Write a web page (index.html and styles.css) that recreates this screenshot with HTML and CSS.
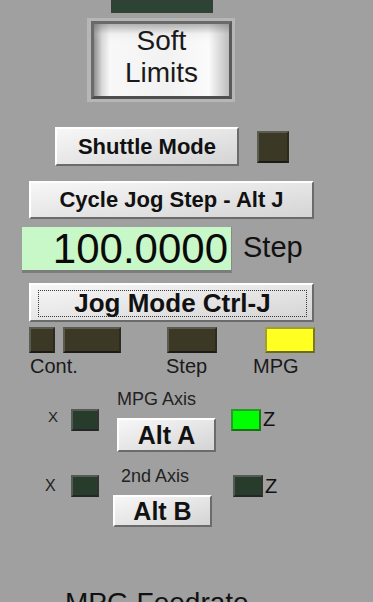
FILE: index.html
```html
<!DOCTYPE html>
<html>
<head>
<meta charset="utf-8">
<link rel="stylesheet" href="styles.css">
</head>
<body>
<div class="panel">
  <div class="led led-green-dark top-led"></div>

  <div class="soft">
    <div class="soft-in">Soft<br>Limits</div>
  </div>

  <div class="row shuttle-row">
    <div class="btn shuttle">Shuttle Mode</div>
    <div class="led led-olive shuttle-led"></div>
  </div>

  <div class="btn cycle">Cycle Jog Step - Alt J</div>

  <div class="row dro-row">
    <div class="dro">100.0000</div>
    <div class="dro-label">Step</div>
  </div>

  <div class="btn jog"><span class="focus">Jog Mode Ctrl-J</span></div>

  <div class="row mode-leds">
    <div class="led led-olive m1"></div>
    <div class="led led-olive m2"></div>
    <div class="led led-olive m3"></div>
    <div class="led led-yellow m4"></div>
  </div>

  <div class="row mode-labels">
    <span class="lbl-cont">Cont.</span>
    <span class="lbl-step">Step</span>
    <span class="lbl-mpg">MPG</span>
  </div>

  <div class="row axis axis1">
    <span class="axis-x">X</span>
    <div class="led led-green-dark axis-led"></div>
    <div class="axis-center">
      <div class="axis-title">MPG Axis</div>
      <div class="btn alt">Alt A</div>
    </div>
    <div class="led led-green axis-led-r"></div>
    <span class="axis-z">Z</span>
  </div>

  <div class="row axis axis2">
    <span class="axis-x">X</span>
    <div class="led led-green-dark axis-led"></div>
    <div class="axis-center">
      <div class="axis-title">2nd Axis</div>
      <div class="btn alt">Alt B</div>
    </div>
    <div class="led led-green-dark axis-led-r"></div>
    <span class="axis-z">Z</span>
  </div>

  <div class="feed">MPG Feedrate</div>
</div>
</body>
</html>
```

FILE: styles.css
```css
html, body {
  margin: 0;
  padding: 0;
  background: #a0a0a0;
  overflow: hidden;
}
body {
  width: 373px;
  height: 602px;
  font-family: "Liberation Sans", Arial, sans-serif;
  color: #111;
}
.panel {
  display: flex;
  flex-direction: column;
  align-items: flex-start;
}
.row {
  display: flex;
  flex-direction: row;
}

/* LEDs */
.led {
  box-sizing: border-box;
  border-style: solid;
  border-width: 2px;
}
.led-olive {
  background: #3b3926;
  border-color: #5c5b50 #2c2b20 #1c1c16 #5c5b50;
}
.led-green-dark {
  background: #283c2c;
  border-color: #565a56 #333 #262626 #565a56;
}
.led-green {
  background: #00ff00;
  border-color: #2a9a2a #1c7a1c #187018 #2a9a2a;
}
.led-yellow {
  background: #ffff22;
  border-color: #a0a030 #78781c #6a6a18 #a0a030;
}

.top-led {
  margin-left: 111px;
  width: 102px;
  height: 13px;
  border-width: 1px;
  border-color: #3c3c3c;
  background: #2b4433;
}

/* Soft Limits */
.soft {
  box-sizing: border-box;
  margin-top: 5px;
  margin-left: 87px;
  width: 148px;
  height: 84px;
  padding: 3px 3px 3px 4px;
  background: #b6b6b6;
}
.soft-in {
  box-sizing: border-box;
  height: 100%;
  border: 3px solid;
  border-color: #6a6a6a #5a5a5a #4e4e4e #6a6a6a;
  background:
    linear-gradient(to bottom, rgba(120,120,120,0.55) 0, rgba(200,200,200,0.15) 10px, rgba(255,255,255,0) 18px),
    linear-gradient(to right, #8e8e8e 0, #d8d8d8 8px, #f8f8f8 16px, #f2f2f2 55%, #fbfbfb 85%, #bdbdbd 100%);
  text-align: center;
  font-size: 28px;
  line-height: 32px;
  padding-top: 1px;
  color: #1a1a1a;
}

/* Buttons */
.btn {
  box-sizing: border-box;
  border: 2px solid;
  border-color: #ffffff #6b6b6b #6b6b6b #ffffff;
  background: linear-gradient(to bottom right, #f7f7f7, #e6e6e6 50%, #d4d4d4);
  display: flex;
  align-items: center;
  justify-content: center;
  font-weight: bold;
  color: #111;
  white-space: nowrap;
}
.shuttle-row {
  margin-top: 25px;
  align-items: center;
}
.shuttle {
  margin-left: 55px;
  width: 184px;
  height: 39px;
  font-size: 22px;
}
.shuttle-led {
  margin-left: 18px;
  width: 32px;
  height: 32px;
}
.cycle {
  margin-top: 15px;
  margin-left: 29px;
  width: 285px;
  height: 38px;
  font-size: 22px;
}

/* DRO */
.dro-row {
  margin-top: 8px;
  align-items: center;
}
.dro {
  box-sizing: border-box;
  margin-left: 22px;
  width: 210px;
  height: 46px;
  background: #c8f8c8;
  border-bottom: 3px solid #7c7c7c;
  border-right: 1px solid #8a8a8a;
  text-align: right;
  padding-right: 3px;
  font-size: 42px;
  line-height: 44px;
  color: #0a0a0a;
}
.dro-label {
  margin-left: 11px;
  font-size: 29px;
  line-height: 32px;
  margin-top: -6px;
  color: #111;
}

.jog {
  margin-top: 10px;
  margin-left: 29px;
  width: 285px;
  height: 39px;
  padding: 5px 5px 3px 7px;
  font-size: 26px;
}
.focus {
  box-sizing: border-box;
  flex: 1;
  align-self: stretch;
  border: 1px dotted #3a3a3a;
  display: flex;
  align-items: center;
  justify-content: center;
}

/* Mode LEDs */
.mode-leds {
  margin-top: 5px;
  height: 26px;
}
.mode-leds .led { height: 26px; }
.m1 { margin-left: 29px; width: 26px; }
.m2 { margin-left: 8px; width: 58px; }
.m3 { margin-left: 46px; width: 50px; }
.m4 { margin-left: 48px; width: 50px; }

.mode-labels {
  margin-top: 2px;
  font-size: 20px;
  line-height: 22px;
  color: #1a1a1a;
}
.lbl-cont { margin-left: 30px; width: 136px; }
.lbl-step { width: 87px; }

/* Axis sections */
.axis {
  align-items: flex-start;
}
.axis1 { margin-top: 12px; }
.axis2 { margin-top: 14px; }

.axis-x {
  font-size: 15px;
  line-height: 16px;
  color: #222;
}
.axis-led {
  width: 28px;
  height: 22px;
}
.axis-title {
  font-size: 18px;
  line-height: 20px;
  color: #222;
}
.alt {
  margin-top: 9px;
  width: 99px;
  font-size: 25px;
}
.axis-z {
  margin-left: 2px;
  font-size: 20px;
  line-height: 22px;
  color: #111;
}

.axis1 .axis-x { margin-left: 48px; width: 23px; margin-top: 20px; }
.axis1 .axis-led { margin-top: 20px; }
.axis1 .axis-center { margin-left: 18px; }
.axis1 .alt { height: 34px; }
.axis1 .axis-led-r { margin-left: 15px; margin-top: 20px; width: 30px; height: 22px; }
.axis1 .axis-z { margin-top: 19px; }

.axis2 .axis-x { margin-left: 45px; width: 26px; margin-top: 12px; font-size: 16px; }
.axis2 .axis-led { margin-top: 9px; }
.axis2 .axis-center { margin-left: 14px; }
.axis2 .axis-title { margin-left: 8px; }
.axis2 .alt { height: 32px; }
.axis2 .axis-led-r { margin-left: 21px; margin-top: 9px; width: 30px; height: 22px; }
.axis2 .axis-z { margin-top: 9px; }

.feed {
  margin-top: 60px;
  margin-left: 65px;
  font-size: 28px;
  line-height: 32px;
  color: #111;
  white-space: nowrap;
}
```
